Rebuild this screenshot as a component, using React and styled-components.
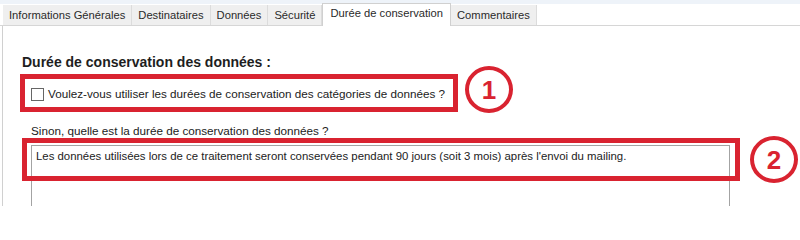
import React from "react";
import styled, { createGlobalStyle } from "styled-components";

const GlobalStyle = createGlobalStyle`
  html, body {
    margin: 0;
    padding: 0;
    background: #ffffff;
  }
  body {
    font-family: "Liberation Sans", Arial, sans-serif;
  }
`;

const RED = "#d92330";

const tabs = [
  "Informations Générales",
  "Destinataires",
  "Données",
  "Sécurité",
  "Durée de conservation",
  "Commentaires",
];

const App = () => {
  return (
    <>
      <GlobalStyle />
      <Page>
        <TopStrip />
        <TabBar>
          {tabs.map((label) => (
            <Tab key={label} active={label === "Durée de conservation"}>
              {label}
            </Tab>
          ))}
        </TabBar>
        <Panel>
          <Heading>Durée de conservation des données :</Heading>
          <AnnotatedRow>
            <RedBox>
              <CheckBox />
              <CheckLabel>
                Voulez-vous utiliser les durées de conservation des catégories
                de données ?
              </CheckLabel>
            </RedBox>
            <Marker offset={-8}>1</Marker>
          </AnnotatedRow>
          <FieldLabel>Sinon, quelle est la durée de conservation des données ?</FieldLabel>
          <FieldWrap>
            <TextArea>
              Les données utilisées lors de ce traitement seront conservées
              pendant 90 jours (soit 3 mois) après l'envoi du mailing.
            </TextArea>
            <OverlayBox />
            <OverlayMarker>2</OverlayMarker>
          </FieldWrap>
        </Panel>
      </Page>
    </>
  );
};

const Page = styled.div`
  width: 800px;
  height: 206px;
  overflow: hidden;
  background: #ffffff;
  color: #222222;
`;

const TopStrip = styled.div`
  height: 4px;
  background: #eef3f9;
`;

const TabBar = styled.div`
  display: flex;
  align-items: flex-end;
  height: 21px;
  padding-left: 3px;
  border-bottom: 1px solid #d6d6d6;
`;

const Tab = styled.div`
  display: flex;
  align-items: center;
  box-sizing: border-box;
  height: ${(p) => (p.active ? "23px" : "20px")};
  margin-bottom: ${(p) => (p.active ? "-1px" : "0")};
  padding: 0 ${(p) => (p.active ? "7px" : "6px")};
  padding-bottom: ${(p) => (p.active ? "4px" : "0")};
  background: ${(p) => (p.active ? "#ffffff" : "#efefef")};
  border-right: 1px solid ${(p) => (p.active ? "#d0d0d0" : "#dcdcdc")};
  border-left: ${(p) => (p.active ? "1px solid #d0d0d0" : "none")};
  border-top: ${(p) => (p.active ? "1px solid #d0d0d0" : "none")};
  font-size: 11.2px;
  color: #2a2a2a;
  white-space: nowrap;
`;

const Panel = styled.div`
  margin-left: 2px;
  padding-top: 29px;
  height: 200px;
  border-left: 1px solid #d0d0d0;
`;

const Heading = styled.div`
  margin-left: 19px;
  font-size: 14px;
  line-height: 15px;
  font-weight: bold;
  color: #1e1e1e;
`;

const AnnotatedRow = styled.div`
  display: flex;
  align-items: flex-start;
  gap: 7px;
  margin-top: 4px;
  margin-left: 17px;
`;

const RedBox = styled.div`
  display: flex;
  align-items: center;
  gap: 4px;
  box-sizing: border-box;
  width: 438px;
  height: 38px;
  padding-left: 6px;
  border: 5px solid ${RED};
`;

const CheckBox = styled.span`
  display: block;
  box-sizing: border-box;
  width: 13px;
  height: 13px;
  margin-top: 3px;
  border: 1px solid #666666;
  background: #ffffff;
`;

const CheckLabel = styled.span`
  font-size: 11.7px;
  color: #222222;
  white-space: nowrap;
`;

const Marker = styled.div`
  display: flex;
  align-items: center;
  justify-content: center;
  box-sizing: border-box;
  width: 48px;
  height: 47px;
  margin-top: ${(p) => p.offset || 0}px;
  border: 4px solid ${RED};
  border-radius: 50%;
  background: #ffffff;
  color: ${RED};
  font-size: 26px;
  font-weight: bold;
  line-height: 1;
`;

const FieldLabel = styled.div`
  margin-top: 11px;
  margin-left: 28px;
  font-size: 11.7px;
  line-height: 14px;
  color: #222222;
`;

const FieldWrap = styled.div`
  position: relative;
  margin-left: 19px;
  padding-top: 7px;
`;

const TextArea = styled.div`
  box-sizing: border-box;
  width: 699px;
  height: 90px;
  margin-left: 9px;
  padding: 3px 4px;
  border: 1px solid #a3a3a3;
  font-size: 11.4px;
  line-height: 14px;
  color: #222222;
`;

const OverlayBox = styled.div`
  position: absolute;
  left: 0;
  top: 0;
  box-sizing: border-box;
  width: 718px;
  height: 43px;
  border: 5px solid ${RED};
`;

const OverlayMarker = styled(Marker)`
  position: absolute;
  left: 728px;
  top: -2px;
`;

export default App;
